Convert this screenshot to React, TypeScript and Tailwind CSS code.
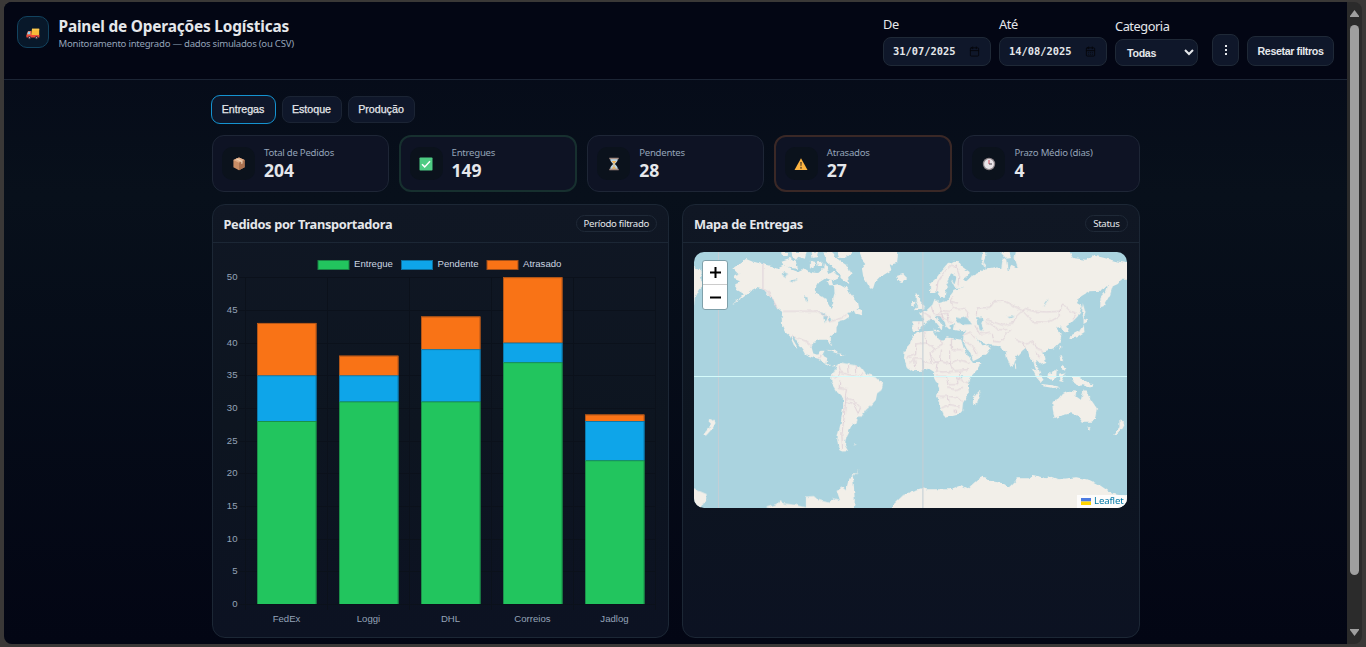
import type { ReactNode } from "react";
import { LuCalendar, LuCalendarDays } from "react-icons/lu";

const ui = "font-['Noto_Sans','Open_Sans',sans-serif]";
const arial = "font-['Liberation_Sans',Arial,sans-serif]";

function Truck() {
  return (
    <svg viewBox="0 0 14 12" className="mt-[3px] h-3 w-3.5">
      <path d="M6 .8h7.2v7H5z" fill="#f7b938" />
      <path d="M6 .8h7.2v1.4H6z" fill="#fbc94f" />
      <path d="M2 3h3.4v6H.7V6z" fill="#f2603c" />
      <path d="M2.2 3.6h2v2.6H1.2z" fill="#8bd3f4" />
      <path d="M.5 7h12.9v2.5H.5z" fill="#ee4a3b" />
      <circle cx="3.5" cy="9.7" r="1.6" fill="#44313f" />
      <circle cx="10.5" cy="9.7" r="1.6" fill="#44313f" />
      <circle cx="3.5" cy="9.7" r=".6" fill="#c9c4cd" />
      <circle cx="10.5" cy="9.7" r=".6" fill="#c9c4cd" />
    </svg>
  );
}

const icons: Record<string, ReactNode> = {
  box: (
    <>
      <path d="M7 .5 12.6 3v7.2L7 13.2 1.4 10.2V3z" fill="#c98d66" />
      <path d="M7 .5 12.6 3 7 5.8 1.4 3z" fill="#e3b08b" />
      <path d="M7 5.8 12.6 3v7.2L7 13.2z" fill="#ab7250" />
      <path d="m3.5 2 5.8 2.7v2.4l1.2-.7V4L4.8 1.4z" fill="#eed2b5" />
    </>
  ),
  check: (
    <>
      <rect x=".5" y=".5" width="13" height="13" rx=".8" fill="#4ecb83" />
      <path d="m3 7.3 2.7 2.6L11 4.3" fill="none" stroke="#fff" strokeWidth="1.5" />
    </>
  ),
  hourglass: (
    <>
      <path d="M3.2 2h7.6c0 2.8-1.8 3.8-2.9 5 1.1 1.2 2.9 2.2 2.9 5H3.2c0-2.8 1.8-3.8 2.9-5C5 5.8 3.2 4.8 3.2 2z" fill="#b9d3e0" />
      <path d="M4.6 3.9h4.8L7.4 6.4v3.2l2 2.200H4.600l2-2.200V6.400z" fill="#efb357" />
      <path d="M2.3.7h9.4v1.5H2.3zM2.3 11.8h9.4v1.5H2.3z" fill="#a58d83" />
    </>
  ),
  warning: (
    <>
      <path d="M7 1.2 13.5 13H.5z" fill="#fdb441" />
      <path d="M6.3 5h1.4L7.4 9.3h-.8z" fill="#4a3622" />
      <circle cx="7" cy="10.9" r=".8" fill="#4a3622" />
    </>
  ),
  clock: (
    <>
      <circle cx="7" cy="7" r="6.2" fill="#8d8488" />
      <circle cx="7" cy="7" r="4.9" fill="#e9e4e8" />
      <path d="M7 3v4" stroke="#d44c5c" strokeWidth="1" fill="none" />
      <path d="M7 7h3" stroke="#4b454c" strokeWidth="1" fill="none" />
    </>
  ),
};

function DateField({ label, value, days }: { label: string; value: string; days?: boolean }) {
  const Icon = days ? LuCalendarDays : LuCalendar;
  return (
    <label className="flex w-[108px] flex-col gap-1">
      <span className="h-[18px] text-[12.8px] leading-[18px] tracking-[-0.4px]">{label}</span>
      <span className="flex h-[29px] items-center justify-between rounded-lg border border-[#1f2937] bg-[#0f172a] pr-2.5 pl-[9px] font-['DejaVu_Sans_Mono',monospace] text-[10.4px] font-bold">
        {value}
        <Icon className="size-[11px] text-[#05070c]" />
      </span>
    </label>
  );
}

function Header() {
  return (
    <header className="flex h-[78px] shrink-0 items-start justify-between border-b border-[#1c2535] bg-[#030614] pr-[13px] pl-[13px]">
      <div className="mt-3.5 flex gap-[9.5px]">
        <div className="flex size-8 items-center justify-center rounded-[10px] border border-[#12435f] bg-[#08182a]">
          <Truck />
        </div>
        <div className="pt-px">
          <h1 className="text-[15.4px] leading-5 font-bold tracking-[-0.18px] whitespace-nowrap">Painel de Operações Logísticas</h1>
          <p className="text-[9.6px] leading-[13px] tracking-[-0.25px] whitespace-nowrap text-[#94a3b8]">Monitoramento integrado — dados simulados (ou CSV)</p>
        </div>
      </div>
      <div className="flex h-16 items-end gap-2">
        <DateField label="De" value="31/07/2025" />
        <DateField label="Até" value="14/08/2025" days />
        <label className="flex w-[83px] flex-col gap-1">
          <span className="h-[18px] text-[12.8px] leading-[18px] tracking-[-0.45px]">Categoria</span>
          <span className={`${arial} flex h-[27px] items-center justify-between rounded-lg border border-[#1f2937] bg-[#0f172a] pr-[3px] pl-[11px] text-[10.667px] font-bold tracking-[-0.3px]`}>
            Todas
            <svg viewBox="0 0 10 7" className="h-[7px] w-2.5" fill="none" stroke="currentColor" strokeWidth="2">
              <path d="m1 1 4 4 4-4" />
            </svg>
          </span>
        </label>
        <button className="ml-1.5 flex h-8 w-[27px] items-center justify-center rounded-lg border border-[#1f2937] bg-[#0f172a]">
          <svg viewBox="0 0 2 11" className="h-[11px] w-[2px]" fill="currentColor">
            <path d="M0 0h2v2H0zM0 4h2v2H0zM0 8h2v2H0z" />
          </svg>
        </button>
        <button className={`${arial} h-[30px] w-[87px] rounded-lg border border-[#1f2937] bg-[#0f172a] text-[10.667px] font-bold tracking-[-0.38px] whitespace-nowrap`}>
          Resetar filtros
        </button>
      </div>
    </header>
  );
}

const stats = [
  { icon: "box", label: "Total de Pedidos", value: "204", border: "border border-[#1e2636]" },
  { icon: "check", label: "Entregues", value: "149", border: "border-2 border-[#17302f]" },
  { icon: "hourglass", label: "Pendentes", value: "28", border: "border border-[#1e2636]" },
  { icon: "warning", label: "Atrasados", value: "27", border: "border-2 border-[#3a2826]" },
  { icon: "clock", label: "Prazo Médio (dias)", value: "4", border: "border border-[#1e2636]" },
];

function StatCard({ icon, label, value, border }: (typeof stats)[number]) {
  return (
    <div className={`${border} flex h-[57px] items-center rounded-[12px] bg-[#0e1324]`}>
      <div className={`${border.includes("border-2") ? "ml-[8.5px]" : "ml-[9.5px]"} flex size-[33px] items-center justify-center rounded-[10px] bg-[#0b121c]`}>
        <svg viewBox="0 0 14 14" className="mt-px size-3.5">{icons[icon]}</svg>
      </div>
      <div className="ml-[9px] whitespace-nowrap">
        <div className="text-[9.6px] leading-[13px] tracking-[-0.25px] text-[#94a3b8]">{label}</div>
        <div className="text-[17.6px] leading-[22px] font-bold tracking-[-0.1px]">{value}</div>
      </div>
    </div>
  );
}

function Panel({ title, tag, children }: { title: string; tag: string; children: ReactNode }) {
  return (
    <section className="flex h-[434px] flex-col overflow-hidden rounded-[13px] border border-[#1c2735] bg-linear-to-b from-[#101724] via-[#0d1520] to-[#0c1222]">
      <div className="flex h-[38px] shrink-0 items-center justify-between border-b border-[#1c2735] pr-[11px] pl-[11px]">
        <h2 className="pt-[3px] text-[12.8px] font-bold tracking-[-0.33px] whitespace-nowrap">{title}</h2>
        <span className="flex h-[17px] items-center rounded-full border border-[#1f2937] px-[7px] pt-px text-[9.6px] tracking-[-0.3px] whitespace-nowrap">{tag}</span>
      </div>
      {children}
    </section>
  );
}

const series = [
  { name: "Entregue", color: "#22c55e", edge: "#198344", x: 318 },
  { name: "Pendente", color: "#0ea5e9", edge: "#0c6f9d", x: 401.5 },
  { name: "Atrasado", color: "#f97316", edge: "#a14f19", x: 487 },
];
const carriers: [string, number[]][] = [
  ["FedEx", [28, 7, 8]],
  ["Loggi", [31, 4, 3]],
  ["DHL", [31, 8, 5]],
  ["Correios", [37, 3, 10]],
  ["Jadlog", [22, 6, 1]],
];
const UNIT = 6.536;
const BASE = 604;

function Chart() {
  return (
    <svg viewBox="213 243 455 394" className="h-[394px] w-[455px] font-['Liberation_Sans',Arial,sans-serif] text-[9.6px]">
      {series.map((s) => (
        <g key={s.name}>
          <rect x={s.x} y="260.500" width="31" height="9" fill={s.color} stroke={s.edge} />
          <text x={s.x + 36} y="267.300" fill="#cbd5e1">{s.name}</text>
        </g>
      ))}
      {Array.from({ length: 11 }, (_, i) => {
        const y = BASE - i * 5 * UNIT;
        return (
          <g key={i}>
            <path d={`M239 ${Math.round(y) + 0.5}H656`} stroke="#0b111b" />
            <text x="237.500" y={y + 3} textAnchor="end" fill="#94a3b8">{i * 5}</text>
          </g>
        );
      })}
      {Array.from({ length: 6 }, (_, i) => (
        <path key={i} d={`M${245.5 + i * 82} 277V610`} stroke="#0b111b" />
      ))}
      {carriers.map(([name, values], i) => {
        let total = 0;
        return (
          <g key={name}>
            {values.map((v, k) => {
              total += v;
              return (
                <g key={k}>
                  <rect x={257 + i * 82} y={BASE - total * UNIT} width="59.500" height={v * UNIT} fill={series[k].color} />
                  <path
                    d={`M${257.5 + i * 82} ${BASE - (total - v) * UNIT}V${BASE - total * UNIT + 0.5}h58.500V${BASE - (total - v) * UNIT}`}
                    fill="none"
                    stroke={series[k].edge}
                    strokeWidth=".8"
                  />
                </g>
              );
            })}
            <text x={286.5 + i * 82} y="622" textAnchor="middle" fill="#94a3b8">{name}</text>
          </g>
        );
      })}
    </svg>
  );
}

function WorldMap() {
  return (
    <svg viewBox="12 12 1299 768" className="h-full w-full" preserveAspectRatio="none">
      <defs>
        <filter id="coast" x="0" y="0" width="1323" height="792" filterUnits="userSpaceOnUse">
          <feTurbulence type="fractalNoise" baseFrequency="0.06" numOctaves="2" seed="4" />
          <feDisplacementMap in="SourceGraphic" scale="12" xChannelSelector="R" yChannelSelector="G" />
        </filter>
      </defs>
      <rect x="0" y="0" width="1330" height="800" fill="#aad3df" />
      <g filter="url(#coast)">
        <g fill="#f2efe9">
          {/* North America, Greenland, Iceland and the Arctic islands */}
          <path d="M130 60 150 45 168 33 185 40 218 48 245 55 262 62 285 50 300 62 325 72 345 62 360 72 385 75 400 62 402 45 412 60 420 78 435 70 445 90 425 100 405 92 385 105 378 118 378 132 392 145 410 152 415 168 422 180 430 165 430 150 434 135 432 112 450 108 468 118 480 135 492 150 505 165 508 180 492 190 472 195 480 205 465 215 450 218 440 235 440 250 420 265 420 278 427 294 420 290 412 275 390 275 372 282 365 298 370 315 385 320 392 308 404 308 397 322 412 330 410 345 425 355 440 350 432 360 415 352 400 342 385 332 365 327 345 318 338 305 325 288 312 268 305 268 318 290 326 303 312 292 300 265 285 252 277 235 275 210 277 192 262 180 250 160 235 140 222 125 200 120 185 128 170 140 150 155 125 170 150 150 162 138 140 125 135 110 150 100 130 92 133 82 148 78z" />
          <path d="M508 0 514 30 526 45 516 60 520 85 540 120 548 127 555 105 575 85 605 67 600 50 622 45 626 0zM618 85 640 78 652 90 640 102 625 98zM0 55 22 60 40 72 30 92 42 110 26 125 14 150 12 175 0 180z" />
          <path d="M275 38 300 30 318 42 325 62 300 60 280 52zM272 12 292 12 290 26 278 24zM305 12 350 12 345 32 325 26 318 36 308 26zM360 38 378 42 374 60 360 58zM380 40 398 38 396 55 384 55zM365 12 385 10 380 28 368 30zM400 10 428 12 440 30 455 42 475 55 485 78 475 88 478 108 465 100 452 90 452 78 440 66 425 52 410 40zM440 8 500 6 470 28 448 30zM410 100 425 98 430 112 415 112zM495 182 515 190 517 202 500 198zM412 305 435 308 448 318 428 312zM448 316 464 320 452 324z" />
          {/* Eurasia */}
          <g transform="translate(630 0)">
            <path d="M38 220 38 248 58 250 70 232 82 220 95 212 105 218 118 235 127 245 128 232 112 212 108 203 120 205 135 222 140 240 150 245 150 232 165 228 165 235 162 245 185 250 200 247 192 262 190 280 200 300 215 325 220 340 240 330 262 318 273 302 262 290 245 292 238 280 228 268 250 285 270 292 300 295 308 305 318 310 322 330 335 358 345 340 350 325 365 308 375 300 385 310 390 325 400 335 405 355 415 380 422 376 412 350 410 335 425 350 440 345 435 325 425 312 440 308 465 300 480 285 485 265 478 250 470 240 488 235 490 245 498 258 508 250 500 235 515 225 535 205 548 175 532 165 545 145 570 130 605 128 625 112 620 130 603 150 602 178 612 175 632 140 640 115 655 108 665 95 700 95 700 48 650 40 615 30 580 22 560 35 520 30 505 0 350 0 345 30 355 60 335 50 325 70 320 35 310 28 305 60 285 58 255 62 235 75 215 85 200 100 190 90 208 82 210 72 185 55 175 40 160 38 140 50 125 68 110 90 90 108 92 135 105 135 115 128 122 150 135 150 138 125 148 115 140 100 155 75 165 80 155 100 165 120 190 118 165 125 150 145 138 160 118 165 105 152 98 170 82 185 62 195 72 220z" />
            <path d="M48 135 58 142 58 155 75 175 72 185 45 187 55 175 48 160zM35 160 46 158 45 176 34 178zM250 8 262 18 252 40 262 62 252 55 245 30zM300 10 325 12 335 30 320 32zM550 165 558 195 552 212 548 190zM552 212 568 218 552 228zM552 230 555 252 530 268 512 272 515 262 540 248zM100 245 115 245 122 252 105 250zM200 258 212 256 205 262zM480 295 485 298 482 310zM480 320 488 325 490 340 482 338zM490 350 500 358 495 370 485 362zM342 345 350 358 344 364z" />
            <path d="M395 358 412 372 432 398 425 405 410 388zM445 375 458 378 472 362 470 390 455 396 443 388zM478 380 498 376 485 388 492 402 480 400zM425 408 460 412 485 418 460 420 430 415zM515 388 535 388 560 400 580 415 570 418 545 405 535 410 520 400z" />
            {/* Africa and Madagascar */}
            <path d="M45 258 75 250 100 248 108 265 130 275 142 268 185 275 192 300 205 325 220 345 245 345 235 362 210 390 205 410 208 435 190 465 188 485 175 500 135 509 122 480 112 445 118 420 103 390 103 372 88 362 65 368 40 370 22 358 12 335 15 310 30 290 35 270zM238 428 241 445 230 472 220 470 220 452z" />
          </g>
          {/* Oceania and Antarctica */}
          <g transform="translate(630 366)">
            <path d="M458 98 480 85 490 72 510 62 530 65 528 78 545 90 552 58 562 70 575 90 592 115 588 140 578 158 550 158 535 138 515 130 480 138 465 145 460 120zM564 172 576 172 570 182zM535 30 560 35 580 45 570 52 550 46 535 48zM660 148 677 158 668 175 648 195 638 195 660 172z" />
            <path d="M-20 405 0 388 30 365 65 355 80 358 150 358 185 346 205 355 235 328 250 320 265 325 270 332 310 340 328 352 355 325 392 325 400 315 440 325 455 320 475 328 530 322 570 330 600 345 640 372 700 380 700 430-20 430z" />
          </g>
          {/* South America, New Zealand and the Antarctic Peninsula */}
          <g transform="translate(0 366)">
            <path d="M432 5 440-10 445-20 455-22 475-18 495-15 515-8 528 10 560 22 580 40 575 60 562 70 558 90 545 105 528 120 515 140 505 140 500 158 485 170 470 200 465 225 475 243 460 245 445 230 442 205 452 160 460 110 460 85 440 65 425 40 424 22zM490 222 502 225 492 229z" />
            <path d="M60 146 77 158 68 175 48 197 38 195 58 172zM0 348 25 362 50 372 48 390 30 420 0 420zM230 412 262 402 268 394 280 400 322 405 348 412 348 380 372 378 385 390 420 398 430 385 450 390 440 360 455 350 468 360 475 330 490 312 510 298 490 318 492 350 495 390 490 430 230 430zM610 405 640 375 700 360 700 430 610 430z" />
          </g>
        </g>
        {/* Inland seas, lakes and bays */}
        <g fill="#aad3df">
          <path d="M280 72 292 78 285 88 275 82zM298 100 325 92 305 106zM345 145 352 148 354 162 347 158zM388 192 410 198 402 205zM400 208 412 206 405 225zM416 204 428 212 420 222 414 214z" />
          <path d="M798 222 802 208 816 212 830 206 845 228 825 230zM862 208 876 206 882 218 874 226 882 248 870 246 866 228zM950 204 972 202 960 210zM1058 175 1074 152 1070 164zM814 382 822 382 820 390 813 390zM790 78 800 90 794 110 786 96z" />
        </g>
        {/* Country borders */}
        <g fill="none" stroke="#d9c8d3" strokeWidth="2.2">
          <path d="M219 48V122L235 132 262 178M280 190H378L400 200 420 222 455 210 470 200M303 265 330 272 348 280 365 294M385 332 392 322M428 386 445 385 452 372 448 356M452 372 470 378 500 386 520 378M476 350 478 375M496 352 498 380M450 400 448 418 470 422 466 450 490 456 504 474 512 480 505 496M468 450 464 500 456 560 458 600M468 462 490 466 505 496" />
          <g transform="translate(630 0)">
            <path d="M110 130 115 100 135 70 155 52 175 55M170 50 178 80 175 110M70 192 95 208 92 218M95 175 100 195 118 200 140 196 150 215M118 168 125 188 150 190 165 180 150 160 160 145M125 188 110 200M142 196 145 222 160 224M165 180 195 182 205 195 200 210M150 160 175 165M112 205 130 208 142 214M125 195 132 218M230 200 232 180 270 178 280 162 310 158 335 170 368 188 350 205 340 225 310 232 290 225 262 215M368 188 378 182 405 190 440 192 480 190 478 205 445 222 400 222 368 188M480 190 490 168 512 190 530 195 520 215M260 222 280 232 295 245 320 245M275 255 280 280 300 282 320 255 335 245M225 232 240 258 270 252M192 278 225 300 232 318M190 262 212 252 225 270M350 275 380 288 400 282 410 300 430 308M372 285 378 305M408 312 420 330M58 220 55 245" />
            <path d="M75 252 78 285 48 288 48 320 20 330M78 285 105 302 128 292 125 272M155 272V305H185M105 302 88 320 95 345 70 340 60 330 45 330 30 345M125 305 122 340 100 345M122 340 150 348 178 335 210 345M150 310 150 348 165 368 205 365M70 340 72 365M45 335 48 365M88 320 112 345 108 370 130 372 160 370M108 385 140 385 145 410 175 410 172 390 205 405M115 445 145 445 150 470 125 480M145 420 165 425 190 418M150 445 178 450 190 462M150 470 180 475M180 370 178 400" />
            <circle cx="167" cy="490" r="4" />
          </g>
        </g>
      </g>
      <path d="M85.5 0V800M699.500 0V800" stroke="#c3ced5" strokeWidth="3.2" />
      <path d="M0 385.500H1330" stroke="#d5fbfb" strokeWidth="3" />
    </svg>
  );
}

function MapBox() {
  return (
    <div className="relative mt-[9px] mr-3 ml-[11px] h-64 shrink-0 overflow-hidden rounded-[10px]">
      <WorldMap />
      <div className="absolute top-[8px] left-[8px] flex w-[26px] flex-col rounded-[3px] border border-[#7fa0aa] bg-white">
        <button className="flex h-6 items-center justify-center border-b border-[#ccc]">
          <svg viewBox="0 0 11 11" className="size-[11px]" stroke="#000" strokeWidth="2"><path d="M0 5.500h11M5.500 0v11" /></svg>
        </button>
        <button className="flex h-6 items-center justify-center">
          <svg viewBox="0 0 11 11" className="size-[11px]" stroke="#000" strokeWidth="2"><path d="M0 5.500h11" /></svg>
        </button>
      </div>
      <div className="absolute right-0 bottom-0 flex h-[13px] items-center gap-[3px] bg-white/80 pr-[3px] pl-1 text-[9.6px] tracking-[-0.15px] text-[#0078a8]">
        <svg viewBox="0 0 10 7" className="h-[7px] w-2.5"><path d="M0 0h10v3.500H0z" fill="#4c7be1" /><path d="M0 3.500h10V7H0z" fill="#ffd500" /></svg>
        Leaflet
      </div>
    </div>
  );
}

export default function App() {
  return (
    <div className={`${ui} h-[647px] w-[1366px] overflow-hidden bg-[#3a3837] pt-0.5 pr-1 pl-1 text-[#e5e7eb]`}>
      <div className="flex h-[642px] overflow-hidden rounded-[8px] bg-[#2b2b2b]">
        <div className="flex w-[1343px] flex-col bg-linear-to-b from-[#050918] via-[#08101b] via-30% to-[#030614]">
          <Header />
          <main className="mx-auto w-[928px] pt-[15px]">
            <nav className={`${arial} -ml-px flex h-[29px] items-center gap-1.5 text-[10.667px] font-medium`}>
              <button className="h-[29px] w-[65px] rounded-[9px] border border-[#1593d0] bg-[#0f172a] pb-0.5 [-webkit-text-stroke:0.25px]">Entregas</button>
              <button className="h-[27px] w-[60px] rounded-lg border border-[#1b2434] bg-[#0f172a] pb-0.5 [-webkit-text-stroke:0.25px]">Estoque</button>
              <button className="h-[27px] w-[67px] rounded-lg border border-[#1b2434] bg-[#0f172a] pb-0.5 [-webkit-text-stroke:0.25px]">Produção</button>
            </nav>
            <div className="mt-[11px] grid grid-cols-5 gap-2.5">
              {stats.map((s) => <StatCard key={s.label} {...s} />)}
            </div>
            <div className="mt-3 grid grid-cols-2 gap-[13px]">
              <Panel title="Pedidos por Transportadora" tag="Período filtrado"><Chart /></Panel>
              <Panel title="Mapa de Entregas" tag="Status"><MapBox /></Panel>
            </div>
          </main>
        </div>
        <div className="flex w-[15px] flex-col items-center pt-2">
          <svg viewBox="0 0 9 7" className="h-[7px] w-[9px]" fill="#a0a0a0"><path d="M4.500 0 9 6v1H0V6z" /></svg>
          <div className="mt-2 h-[550px] w-[9px] rounded-full bg-[#9f9f9f]" />
          <svg viewBox="0 0 9 7" className="mt-[54px] h-[7px] w-[9px]" fill="#a0a0a0"><path d="M4.500 7 9 1V0H0v1z" /></svg>
        </div>
      </div>
    </div>
  );
}
